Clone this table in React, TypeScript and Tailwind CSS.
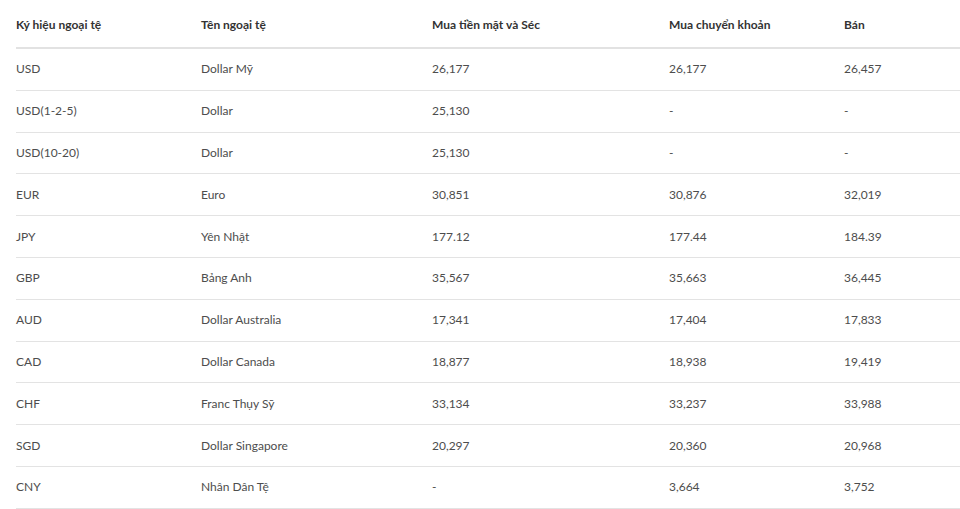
const rows: [string, string, string, string, string][] = [
  ['USD', 'Dollar Mỹ', '26,177', '26,177', '26,457'],
  ['USD(1-2-5)', 'Dollar', '25,130', '-', '-'],
  ['USD(10-20)', 'Dollar', '25,130', '-', '-'],
  ['EUR', 'Euro', '30,851', '30,876', '32,019'],
  ['JPY', 'Yên Nhật', '177.12', '177.44', '184.39'],
  ['GBP', 'Bảng Anh', '35,567', '35,663', '36,445'],
  ['AUD', 'Dollar Australia', '17,341', '17,404', '17,833'],
  ['CAD', 'Dollar Canada', '18,877', '18,938', '19,419'],
  ['CHF', 'Franc Thụy Sỹ', '33,134', '33,237', '33,988'],
  ['SGD', 'Dollar Singapore', '20,297', '20,360', '20,968'],
  ['CNY', 'Nhân Dân Tệ', '-', '3,664', '3,752'],
];

const headers = ['Ký hiệu ngoại tệ', 'Tên ngoại tệ', 'Mua tiền mặt và Séc', 'Mua chuyển khoản', 'Bán'];

const cols = 'grid grid-cols-[185px_231px_237px_175px_1fr]';

export default function App() {
  return (
    <div className="w-[960px] h-[509px] overflow-hidden bg-white pl-4 font-['Lato','Noto_Sans',sans-serif] text-[12px]">
      {/* Header */}
      <div className={`${cols} h-[49px] items-center pt-[3px] border-b-2 border-[#e2e2e2] font-bold text-[#333]`}>
        {headers.map((h) => (
          <div key={h}>{h}</div>
        ))}
      </div>

      {/* Rows */}
      {rows.map((r) => (
        <div key={r[0]} className={`${cols} h-[41.8px] items-center border-b border-[#e3e3e3] text-[#4d4d4d]`}>
          {r.map((c, i) => (
            <div key={i}>{c}</div>
          ))}
        </div>
      ))}
    </div>
  );
}
